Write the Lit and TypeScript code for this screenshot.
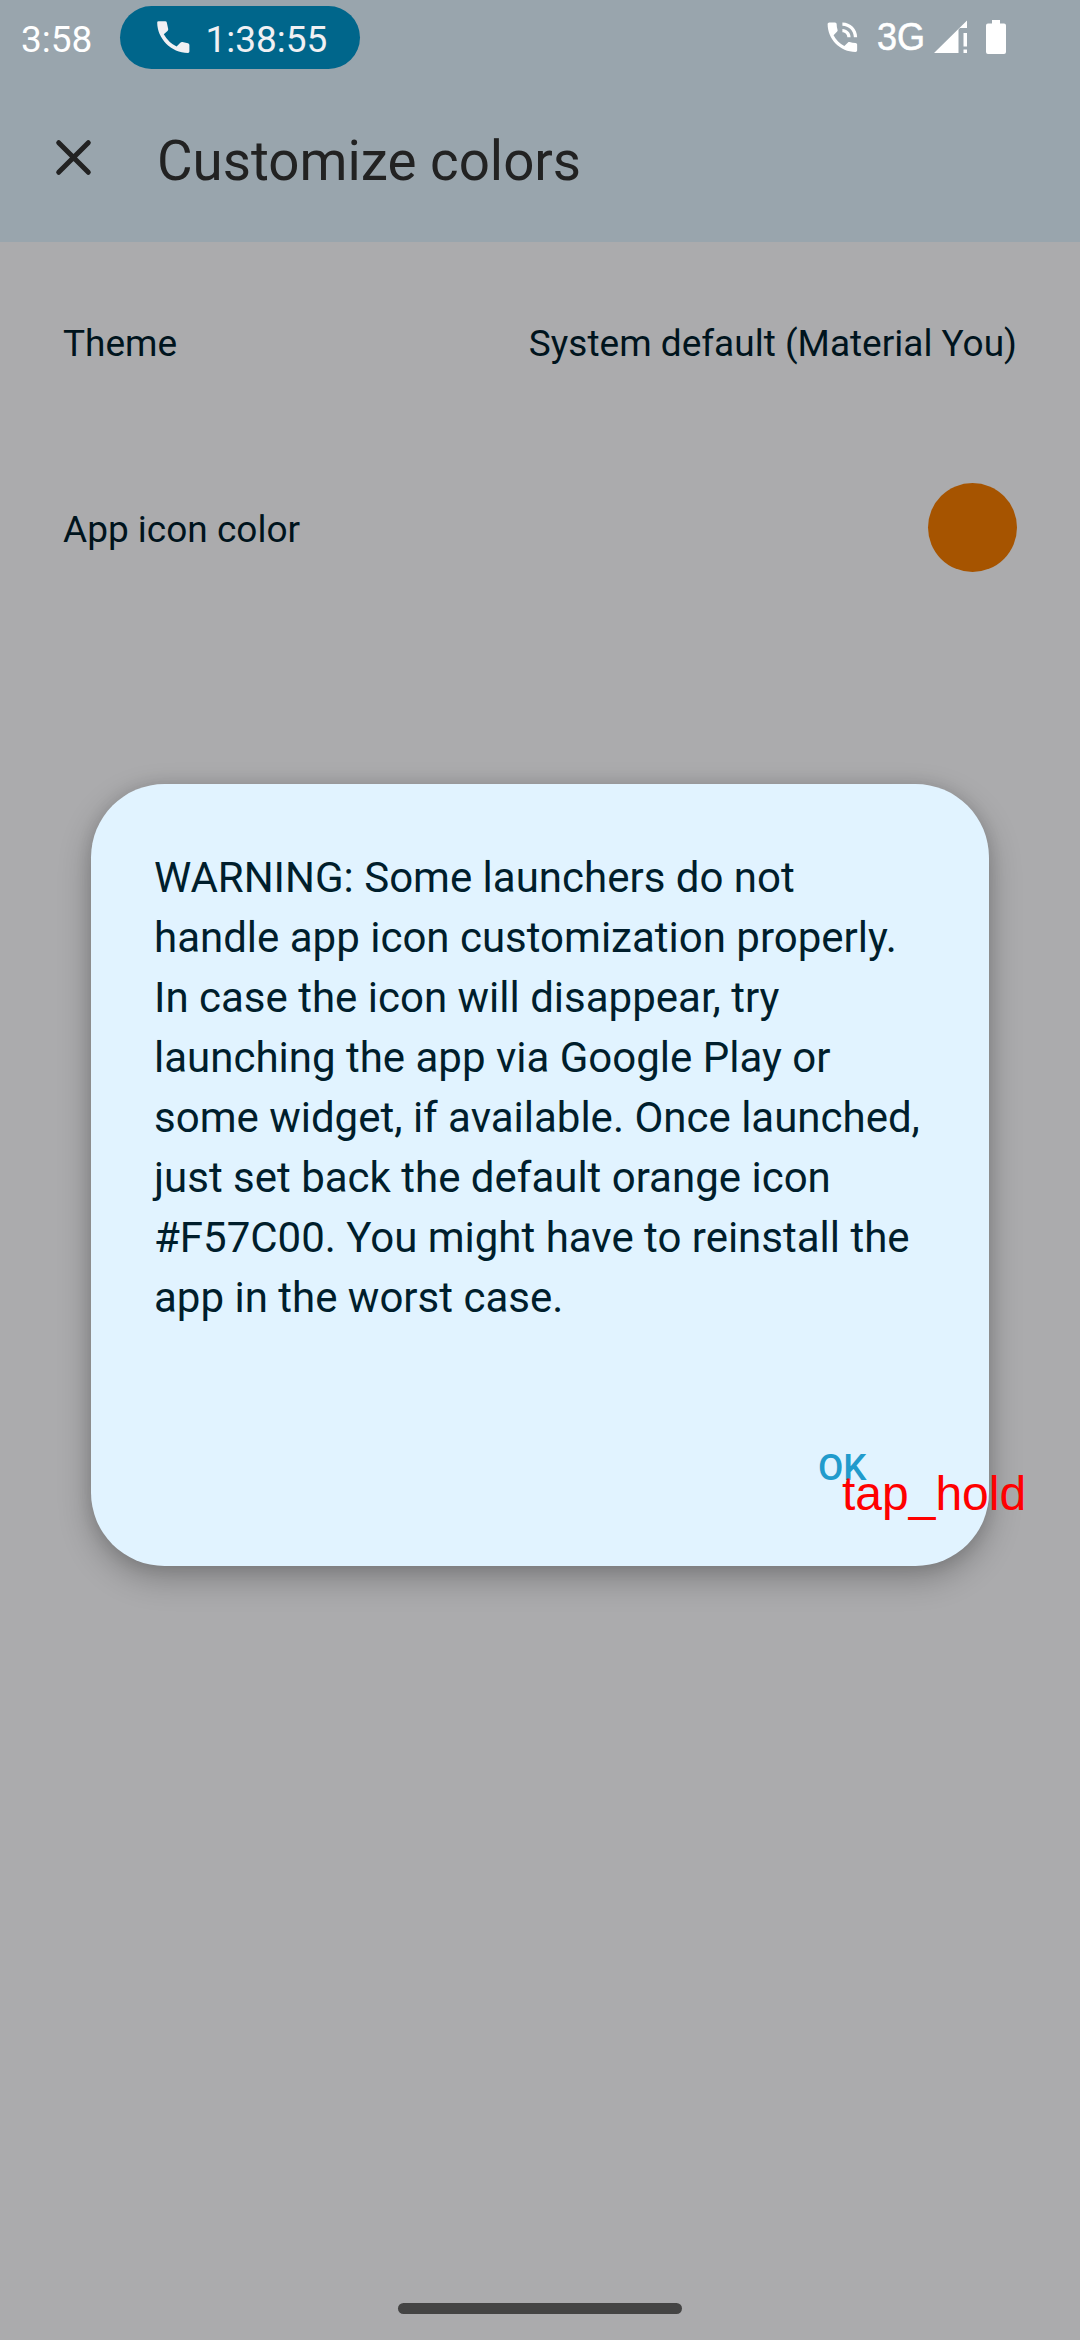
import { LitElement, html, css } from "lit";
import { customElement } from "lit/decorators.js";

@customElement("status-bar")
class StatusBar extends LitElement {
  static styles = css`
    :host { display: flex; align-items: flex-start; height: 74px; color: #fff; font-size: 37px; line-height: 43px; white-space: nowrap; }
    .clock { width: 98px; padding: 18px 0 0 21px; box-sizing: border-box; }
    .chip { display: flex; box-sizing: border-box; width: 240px; height: 63px; margin: 6px 0 0 22px; padding: 10px 0 0 31.5px; border-radius: 31.5px; background: #00668b; color: #f0f0f3; }
    .call { width: 42px; height: 42px; margin-right: 12px; }
    .timer { margin-top: 2px; }
    .icons { display: flex; margin-left: auto; margin-right: 65px; }
    .icons svg { display: block; width: 200px; height: 50px; margin-top: 10px; }
    .net { font-family: "Liberation Sans", Arial, sans-serif; }
  `;
  render() {
    return html`
      <div class="clock">3:58</div>
      <div class="chip">
        <svg class="call" viewBox="0 0 42 42" fill="currentColor"><path d="M6.500 5.200H13.200Q14.600 5.200 14.800 6.500L16.200 13Q16.400 14.200 15.500 15L11.800 18.200Q16.500 26.500 24.600 30.600L28.300 26.800Q29.200 25.800 30.400 26L36 27.200Q37.400 27.600 37.400 29V35.600Q37.400 37 36 37C19 37 5.200 22.500 5.200 6.600Q5.200 5.200 6.500 5.200Z"/></svg>
        <span class="timer">1:38:55</span>
      </div>
      <div class="icons">
        <svg viewBox="815 10 200 50" fill="#fff">
          <g transform="translate(822.7 17.5) scale(1.64)"><path d="M20 15.5c-1.25 0-2.45-.2-3.57-.57-.35-.11-.74-.03-1.02.24l-2.2 2.2c-2.83-1.44-5.15-3.75-6.59-6.59l2.2-2.21c.28-.26.36-.65.25-1C8.7 6.45 8.5 5.25 8.500 4c0-.55-.45-1-1-1H4c-.55 0-1 .45-1 1 0 9.390 7.610 17 17 17 .55 0 1-.45 1-1v-3.500c0-.55-.45-1-1-1zM19 12h2c0-4.970-4.030-9-9-9v2c3.870 0 7 3.130 7 7zm-4 0h2c0-2.760-2.240-5-5-5v2c1.660 0 3 1.340 3 3z"/></g>
          <text class="net" x="877" y="50.2" font-size="38.5" stroke="#fff" stroke-width=".6" textLength="48" lengthAdjust="spacingAndGlyphs">3G</text>
          <path d="M934 53 L967 20.500 V28 H960 L958.500 29.500 V53Z M963.500 33h3.500v13.500h-3.500z M963.500 49.500h3.500V53h-3.500z"/>
          <path d="M992 20h8v3.500h4a2 2 0 0 1 2 2V52a2 2 0 0 1-2 2h-16a2 2 0 0 1-2-2V25.500a2 2 0 0 1 2-2h4z"/>
        </svg>
      </div>`;
  }
}

@customElement("warning-dialog")
class WarningDialog extends LitElement {
  static styles = css`
    :host { display: flex; flex-direction: column; box-sizing: border-box; width: 898px; height: 782px; padding: 64px 63px 63px; border-radius: 73.5px; background: #e1f3ff; box-shadow: 0 12px 32px rgba(0,0,0,.27), 0 0 16px rgba(0,0,0,.1); color: #001e2c; }
    .message { font-size: 42px; line-height: 60px; white-space: nowrap; }
    .actions { display: flex; justify-content: flex-end; margin-top: 118px; padding-right: 59.5px; }
    .ok { all: unset; font-size: 36.75px; font-weight: 500; line-height: 44px; color: #219bcc; }
  `;
  render() {
    return html`
      <div class="message">WARNING: Some launchers do not<br>handle app icon customization properly.<br>In case the icon will disappear, try<br>launching the app via Google Play or<br>some widget, if available. Once launched,<br>just set back the default orange icon<br>#F57C00. You might have to reinstall the<br>app in the worst case.</div>
      <div class="actions"><button class="ok">OK</button></div>`;
  }
}

@customElement("app-root")
class AppRoot extends LitElement {
  static styles = css`
    :host { display: flex; flex-direction: column; position: relative; width: 1080px; height: 2340px; overflow: hidden; background: #ababad; font-family: Roboto, sans-serif; }
    .header { height: 242px; background: #99a5ad; color: #222; }
    .toolbar { display: flex; align-items: center; height: 168px; }
    .close { width: 42px; height: 42px; margin: 0 63px 0 52px; padding-bottom: 2px; }
    .title { font-size: 54.7px; line-height: 64px; margin-top: 5px; }
    .rows { display: flex; flex-direction: column; gap: 17px; flex: 1; padding-top: 15px; color: #00141d; font-size: 37px; }
    .row { display: flex; align-items: center; justify-content: space-between; padding: 0 63px; height: 169px; }
    .label { line-height: 43px; margin-top: 4px; }
    .swatch { width: 89px; height: 89px; border-radius: 50%; background: #a65400; }
    .nav { display: flex; justify-content: center; height: 37px; }
    .handle { width: 284px; height: 11px; border-radius: 5.5px; background: #444; }
    .dialog { position: absolute; left: 91px; top: 784px; }
    .gesture { position: absolute; left: 842px; top: 1466px; color: #f00; font: 48px/55px "Liberation Sans", Arial, sans-serif; }
  `;
  render() {
    return html`
      <div class="header">
        <status-bar></status-bar>
        <div class="toolbar">
          <svg class="close" viewBox="0 0 42 42" fill="none" stroke="#222" stroke-width="5" stroke-linecap="round"><path d="M6.700 6.700 36.300 36.300M36.300 6.700 6.700 36.300"/></svg>
          <span class="title">Customize colors</span>
        </div>
      </div>
      <div class="rows">
        <div class="row"><span class="label">Theme</span><span class="label">System default (Material You)</span></div>
        <div class="row"><span class="label">App icon color</span><span class="swatch"></span></div>
      </div>
      <div class="nav"><div class="handle"></div></div>
      <warning-dialog class="dialog"></warning-dialog>
      <div class="gesture">tap_hold</div>`;
  }
}
